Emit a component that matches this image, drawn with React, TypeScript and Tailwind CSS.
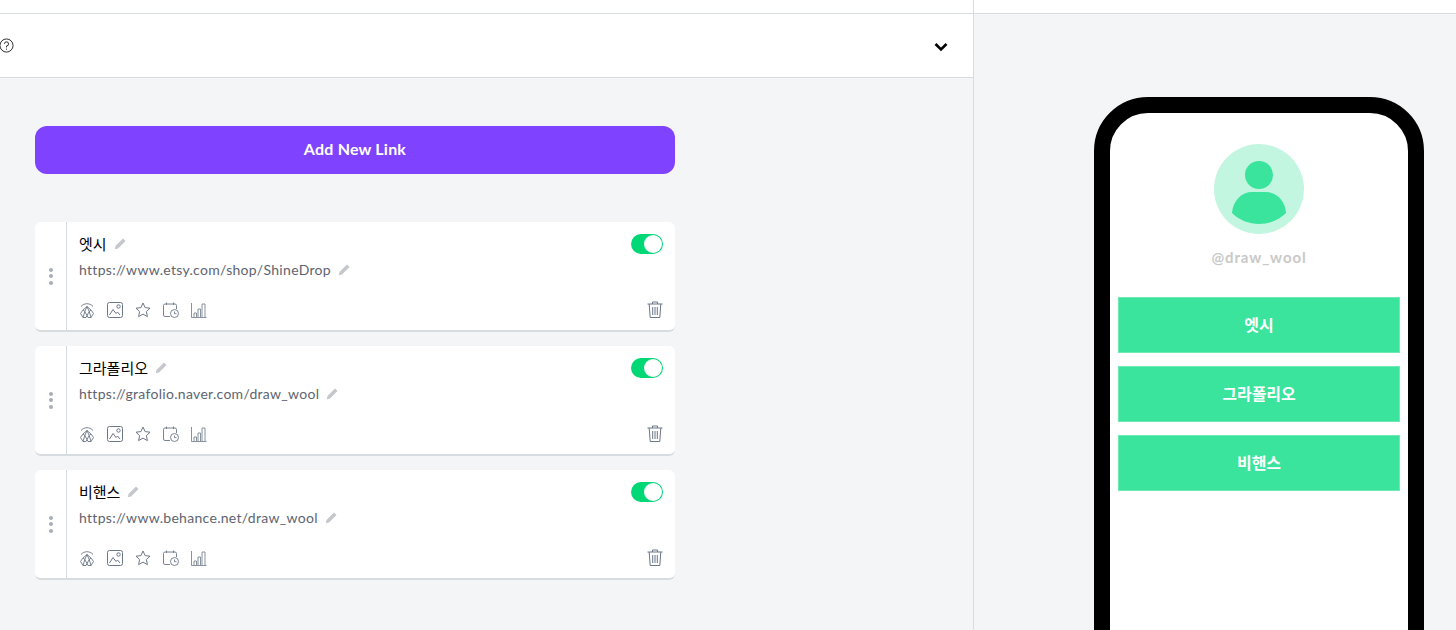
const links = [
  { title: "엣시", url: "https://www.etsy.com/shop/ShineDrop" },
  { title: "그라폴리오", url: "https://grafolio.naver.com/draw_wool" },
  { title: "비핸스", url: "https://www.behance.net/draw_wool" },
];

const font = "font-['Lato','Noto_Sans_CJK_KR',sans-serif]";

function EditIcon() {
  return (
    <svg viewBox="0 0 12 12" className="w-3 h-3 shrink-0 text-[#c4c7cc]" fill="currentColor">
      <path d="M9 .500 11.500 3 4 10.500.800 11.200 1.500 8z" />
    </svg>
  );
}

function ActionIcons() {
  return (
    <div className="flex items-center gap-3 text-[#6b7687]">
      {/* redirect / spotlight */}
      <svg viewBox="0 0 16 16" className="w-4 h-4" fill="none" stroke="currentColor" strokeWidth="0.900">
        <path d="M2 4.500C5 .800 11 .800 14 4.500" />
        <path d="M8 4.500 4 8 1.500 11.500l2.500 4h3L8 13.500l1 2h3l2.500-4L12 8z" />
        <path d="M8 4.500 5.800 9.500 8 13.500l2.200-4zM4 8l1.800 1.500L4 15.500M12 8l-1.800 1.500L12 15.500" />
      </svg>
      <svg viewBox="0 0 16 16" className="w-4 h-4" fill="none" stroke="currentColor" strokeWidth="1">
        <rect x="0.500" y="0.500" width="15" height="15" rx="2" />
        <circle cx="11.500" cy="4.500" r="1.700" />
        <path d="M2.500 13 6 7.500l3 4 1.500-1.500 2.500 3" />
      </svg>
      <svg viewBox="0 0 16 16" className="w-4 h-4" fill="none" stroke="currentColor" strokeWidth="1">
        <path d="M8 1l2.100 4.600 4.900.6-3.600 3.400 1 5L8 12.100 3.600 14.600l1-5L1 6.200l4.900-.6z" />
      </svg>
      <svg viewBox="0 0 16 16" className="w-4 h-4" fill="none" stroke="currentColor" strokeWidth="0.900">
        <path d="M7 14.500H2A1.500 1.500 0 0 1 .500 13V3.500A1.500 1.500 0 0 1 2 2h10a1.500 1.500 0 0 1 1.500 1.500V7M3.500.500v2.500M10.500.500v2.500" />
        <circle cx="11.500" cy="11.500" r="4" />
        <path d="M11.500 9.500v2.200h2" />
      </svg>
      <svg viewBox="0 0 16 16" className="w-4 h-4" fill="none" stroke="currentColor" strokeWidth="0.800">
        <path d="M.500 1v14.500h15" />
        <path d="M3 15v-4h2.500v4M7 15V7h2.500v8M11 15V2h3v13" />
      </svg>
    </div>
  );
}

function TrashIcon() {
  return (
    <svg viewBox="0 0 16 17" className="w-4 h-[17px] text-[#6b7687]" fill="none" stroke="currentColor" strokeWidth="1">
      <path d="M.500 3h15M5.500 3V1h5v2M2.200 3l1 13.500h9.600l1-13.500M5.700 6v8M8 6v8M10.300 6v8" />
    </svg>
  );
}

function LinkCard({ title, url }: { title: string; url: string }) {
  return (
    <div className="flex h-[110px] rounded-md bg-white border-b-2 border-[#d7dce1]">
      <div className="flex w-8 shrink-0 flex-col items-center justify-center gap-[2.500px] border-r border-[#d7dce1]">
        <span className="h-1 w-1 rounded-full bg-[#a8aeb8]" />
        <span className="h-1 w-1 rounded-full bg-[#a8aeb8]" />
        <span className="h-1 w-1 rounded-full bg-[#a8aeb8]" />
      </div>
      <div className="flex flex-1 flex-col pt-3 pb-3 px-3">
        <div className="flex items-center justify-between h-5">
          <div className="flex items-center gap-[7px] text-[15px] leading-[18px] pb-px text-black">
            {title}
            <EditIcon />
          </div>
          <div className="flex h-5 w-8 items-center justify-end rounded-full bg-[#00d775] pr-px">
            <span className="h-[18px] w-[18px] rounded-full bg-white" />
          </div>
        </div>
        <div className="mt-[5px] flex items-center gap-[7px] text-[14px] tracking-[0.3px] text-[#5e6470]">
          {url}
          <EditIcon />
        </div>
        <div className="mt-auto flex items-center justify-between">
          <ActionIcons />
          <TrashIcon />
        </div>
      </div>
    </div>
  );
}

export default function App() {
  return (
    <div className={`flex h-[630px] w-[1456px] overflow-hidden bg-[#f4f5f7] ${font}`}>
      <div className="flex w-[974px] shrink-0 flex-col border-r border-[#d7dce1]">
        <div className="h-[14px] shrink-0 border-b border-[#d7dce1] bg-white" />
        <div className="flex h-[64px] shrink-0 items-center justify-between border-b border-[#d7dce1] bg-white pr-[25px]">
          <svg viewBox="0 0 16 16" className="w-[15px] h-[15px] -ml-px text-[#222]" fill="none" stroke="currentColor" strokeWidth="1">
            <circle cx="8" cy="8" r="7" />
            <path d="M5.800 6.200A2.200 2.200 0 1 1 8 8.500V10M8 11.300v1.200" />
          </svg>
          <svg viewBox="0 0 14 10" className="w-[14px] h-[10px] mt-[2px] text-black" fill="none" stroke="currentColor" strokeWidth="2.600">
            <path d="M1.500 2 7 7.500 12.500 2" />
          </svg>
        </div>
        <div className="ml-[35px] flex w-[640px] flex-col pt-12">
          <button className="h-12 w-full rounded-xl bg-[#7f42ff] pb-0.5 text-[16px] font-bold tracking-[0.2px] text-white">
            Add New Link
          </button>
          <div className="mt-12 flex flex-col gap-[14px]">
            {links.map((l) => (
              <LinkCard key={l.title} title={l.title} url={l.url} />
            ))}
          </div>
        </div>
      </div>
      <div className="flex flex-1 flex-col">
        <div className="h-[14px] shrink-0 border-b border-[#d7dce1] bg-white" />
        <div className="pl-[120px] pt-[83px]">
          <div className="h-[700px] w-[330px] rounded-[54px] border-16 border-black bg-white px-2 pt-[31px]">
            <div className="flex flex-col items-center">
              <div className="flex h-[90px] w-[90px] flex-col items-center overflow-hidden rounded-full bg-[#c3f6e0] pt-[17px]">
                <span className="h-7 w-7 shrink-0 rounded-full bg-[#3ae49c]" />
                <svg viewBox="0 0 54 32" className="mt-[3px] w-[54px] h-[32px] shrink-0 text-[#3ae49c]" fill="currentColor">
                  <path d="M0 21C1 8 10 0 20 0h14c10 0 19 8 20 21C47 28 37 32 27 32S7 28 0 21z" />
                </svg>
              </div>
              <div className="mt-[12px] text-[15px] font-bold tracking-[0.9px] text-[#c9c9c9]">@draw_wool</div>
            </div>
            <div className="mt-[28px] flex flex-col gap-[13.300px]">
              {links.map((l) => (
                <div key={l.title} className="flex h-[56px] items-center justify-center border border-[#6feab5] bg-[#3ae49c] text-[16px] font-bold text-white">
                  {l.title}
                </div>
              ))}
            </div>
          </div>
        </div>
      </div>
    </div>
  );
}
